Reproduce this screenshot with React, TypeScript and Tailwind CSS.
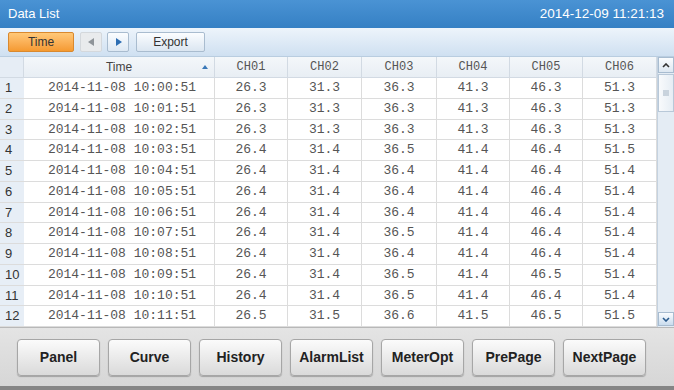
import React from "react";

type Row = { t: string; v: string[] };

const rows: Row[] = [
  { t: "10:00:51", v: ["26.3", "31.3", "36.3", "41.3", "46.3", "51.3"] },
  { t: "10:01:51", v: ["26.3", "31.3", "36.3", "41.3", "46.3", "51.3"] },
  { t: "10:02:51", v: ["26.3", "31.3", "36.3", "41.3", "46.3", "51.3"] },
  { t: "10:03:51", v: ["26.4", "31.4", "36.5", "41.4", "46.4", "51.5"] },
  { t: "10:04:51", v: ["26.4", "31.4", "36.4", "41.4", "46.4", "51.4"] },
  { t: "10:05:51", v: ["26.4", "31.4", "36.4", "41.4", "46.4", "51.4"] },
  { t: "10:06:51", v: ["26.4", "31.4", "36.4", "41.4", "46.4", "51.4"] },
  { t: "10:07:51", v: ["26.4", "31.4", "36.5", "41.4", "46.4", "51.4"] },
  { t: "10:08:51", v: ["26.4", "31.4", "36.4", "41.4", "46.4", "51.4"] },
  { t: "10:09:51", v: ["26.4", "31.4", "36.5", "41.4", "46.5", "51.4"] },
  { t: "10:10:51", v: ["26.4", "31.4", "36.5", "41.4", "46.4", "51.4"] },
  { t: "10:11:51", v: ["26.5", "31.5", "36.6", "41.5", "46.5", "51.5"] },
];

const channels = ["CH01", "CH02", "CH03", "CH04", "CH05", "CH06"];
const navButtons = ["Panel", "Curve", "History", "AlarmList", "MeterOpt", "PrePage", "NextPage"];

// row number | time | six channels
const cols = "grid grid-cols-[24px_191px_73px_74px_75px_73px_73px_74px]";

export default function App() {
  return (
    <div className="flex h-[390px] w-[674px] flex-col overflow-hidden bg-[#dedede] font-['Liberation_Sans',sans-serif]">
      {/* title bar */}
      <div className="flex h-[28px] items-center justify-between bg-gradient-to-b from-[#4a93d4] to-[#3580c4] px-[8px] text-[13px] text-white">
        <span>Data List</span>
        <span className="pr-[2px] text-[13.5px]">2014-12-09 11:21:13</span>
      </div>

      {/* toolbar */}
      <div className="flex h-[29px] items-center gap-[5px] border-b border-[#b9cde0] bg-gradient-to-b from-[#edf4fb] to-[#cfe0f1] pl-[8px]">
        <button className="h-[20px] w-[66px] rounded-[2px] border border-[#d9892f] bg-gradient-to-b from-[#ffc878] to-[#f59a30] text-[12px] text-[#333]">
          Time
        </button>
        <button className="ml-[1px] flex h-[20px] w-[22px] items-center justify-center rounded-[2px] border border-[#d4d8dc] bg-[#e9ebed]">
          <svg width="7" height="8" viewBox="0 0 7 8">
            <path d="M6 0 L0 4 L6 8 Z" fill="#8e9499" />
          </svg>
        </button>
        <button className="flex h-[20px] w-[22px] items-center justify-center rounded-[2px] border border-[#a9bccf] bg-gradient-to-b from-[#fbfdff] to-[#dde8f3]">
          <svg width="7" height="8" viewBox="0 0 7 8">
            <path d="M1 0 L7 4 L1 8 Z" fill="#2d6eb3" />
          </svg>
        </button>
        <button className="ml-[2px] h-[20px] w-[69px] rounded-[2px] border border-[#a9bccf] bg-gradient-to-b from-[#fbfdff] to-[#dbe6f1] text-[12px] text-[#333]">
          Export
        </button>
      </div>

      {/* table */}
      <div className="flex h-[270px] bg-white">
        <div className="flex w-[657px] flex-col">
          <div className={`${cols} h-[21px] border-b border-[#d2dae3] bg-gradient-to-b from-[#f4f7fa] to-[#e8eef4] text-[12px] text-[#444]`}>
            <div className="border-r border-[#d2dae3] bg-[#e6edf5]" />
            <div className="relative flex items-center justify-center border-r border-[#d2dae3]">
              Time
              <span className="absolute right-[6px] top-[8px] h-0 w-0 border-x-[3px] border-b-[4px] border-x-transparent border-b-[#3a78b8]" />
            </div>
            {channels.map((c) => (
              <div
                key={c}
                className="flex items-center justify-center border-r border-[#d2dae3] font-['Liberation_Mono',monospace] text-[12px] text-[#555]"
              >
                {c}
              </div>
            ))}
          </div>

          {rows.map((r, i) => (
            <div key={r.t} className={`${cols} h-[20.75px] border-b border-[#dcdcdc] text-[#555]`}>
              <div className="flex items-center bg-[#e7eef6] pl-[5px] text-[13px] text-[#333]">{i + 1}</div>
              <div className="flex items-center justify-center border-r border-[#dcdcdc] pl-[6px] font-['Liberation_Mono',monospace] text-[13px]">
                2014-11-08 {r.t}
              </div>
              {r.v.map((v, j) => (
                <div
                  key={j}
                  className="flex items-center justify-center border-r border-[#dcdcdc] font-['Liberation_Mono',monospace] text-[13px]"
                >
                  {v}
                </div>
              ))}
            </div>
          ))}
        </div>

        {/* scrollbar */}
        <div className="flex w-[17px] flex-col border-l border-[#c4d2e0] bg-[#e4ecf4]">
          <div className="flex h-[16px] items-center justify-center border border-[#a8bcd0] bg-gradient-to-b from-[#fafcfe] to-[#dde7f1]">
            <svg width="8" height="5" viewBox="0 0 8 5">
              <path d="M1 4 L4 1 L7 4" stroke="#333" strokeWidth="1.6" fill="none" />
            </svg>
          </div>
          <div className="mt-[1px] flex h-[38px] items-center justify-center border border-[#b8c8d8] bg-gradient-to-r from-[#f8fafc] to-[#e6edf4]">
            <div className="h-[6px] w-[6px] bg-[#c9d3dd]" />
          </div>
          <div className="flex-1" />
          <div className="mb-[1px] flex h-[14px] items-center justify-center border border-[#a8bcd0] bg-gradient-to-b from-[#fafcfe] to-[#c9dcee]">
            <svg width="8" height="5" viewBox="0 0 8 5">
              <path d="M1 1 L4 4 L7 1" stroke="#2a5a8c" strokeWidth="1.6" fill="none" />
            </svg>
          </div>
        </div>
      </div>

      {/* navigation buttons */}
      <div className="flex flex-1 items-start gap-[8px] border-t border-[#b8b8b8] border-b-[4px] border-b-[#858585] bg-gradient-to-b from-[#e4e4e4] to-[#d6d6d6] pl-[17px] pt-[11px]">
        {navButtons.map((b) => (
          <button
            key={b}
            className="h-[37px] w-[83px] rounded-[4px] border border-[#a6a6a6] bg-gradient-to-b from-[#fbfbfb] to-[#dadada] text-[14px] font-bold text-[#222] shadow-[0_1px_1px_rgba(0,0,0,0.25)]"
          >
            {b}
          </button>
        ))}
      </div>
    </div>
  );
}
